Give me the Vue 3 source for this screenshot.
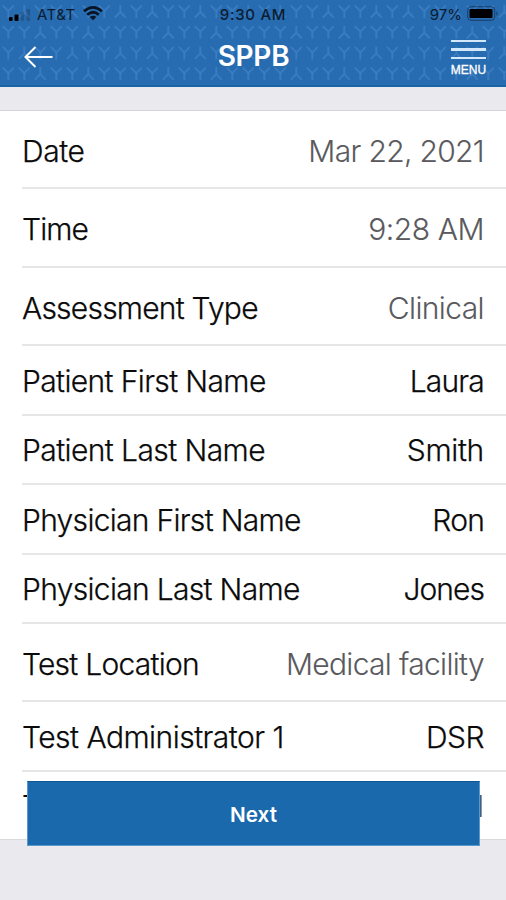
<script setup>
// track / valueTrack: letter spacing of the label and of the value, in px
const rows = [
  { label: 'Date', value: 'Mar 22, 2021', soft: true, size: 'first', track: -0.4, valueTrack: -0.66 },
  { label: 'Time', value: '9:28 AM', soft: true, size: 'second', track: -0.9, valueTrack: -0.45 },
  { label: 'Assessment Type', value: 'Clinical', soft: true, size: 'tall', track: -0.78, valueTrack: -0.6 },
  { label: 'Patient First Name', value: 'Laura', size: 'short', track: -0.62, valueTrack: -0.8 },
  { label: 'Patient Last Name', value: 'Smith', size: 'short', track: -0.58, valueTrack: -0.3 },
  { label: 'Physician First Name', value: 'Ron', size: 'short', track: -0.7, valueTrack: -0.8 },
  { label: 'Physician Last Name', value: 'Jones', size: 'short', track: -0.68, valueTrack: -0.95 },
  { label: 'Test Location', value: 'Medical facility', soft: true, size: 'tall', track: -0.75, valueTrack: -0.67 },
  { label: 'Test Administrator 1', value: 'DSR', size: 'short', track: -0.52, valueTrack: -0.5 },
  { label: 'T', value: 'l', soft: true, size: 'last', track: 0, valueTrack: 0 },
]

// Header texture repeats every eight marks: Y = upright, A = inverted
const texture = ['YAYYAYYA', 'YYAYYAYY', 'YAYYAYYA', 'YYAYYAYY']
const marks = texture.flatMap((line, r) =>
  [...line.repeat(4)].map((kind, c) => ({ x: 8.3 + c * 16, y: 11.5 + r * 20.7, flip: kind === 'A' })),
)
</script>

<template>
  <main class="screen">
    <header class="header">
      <svg class="texture" width="506" height="86" viewBox="0 0 506 86" aria-hidden="true">
        <path
          v-for="(m, i) in marks"
          :key="i"
          d="M-5.5 -6L0 -.5L5.5 -6M0 -.5V6.5"
          :transform="`translate(${m.x} ${m.y}) scale(1 ${m.flip ? -1 : 1})`"
        />
      </svg>
      <div class="status">
        <div class="carrier">
          <svg class="signal" width="23" height="12" viewBox="0 0 23 12">
            <rect x="1" y="8" width="3.6" height="4" rx="1" />
            <rect x="6.5" y="5.5" width="4" height="6.5" rx="1" />
            <rect x="12.5" y="3" width="3.6" height="9" rx="1" opacity=".18" />
            <rect x="18.5" y="0" width="3.6" height="12" rx="1" opacity=".18" />
          </svg>
          <span class="name">AT&amp;T</span>
          <svg class="wifi" width="20" height="15" viewBox="0 0 20 15">
            <path d="M1 5.3Q10-2.5 19 5.3M4.2 8.7Q10 3.8 15.8 8.7" />
            <path class="solid" d="M6.7 11Q10 8.3 13.3 11L10 14.3Z" />
          </svg>
        </div>
        <span class="clock">9:30 AM</span>
        <div class="power">
          <span>97%</span>
          <svg width="34" height="15" viewBox="0 0 34 15">
            <rect class="shell" x="1.7" y=".7" width="27" height="13.6" rx="3.5" />
            <rect x="3.5" y="3" width="23" height="9" rx="1" />
            <path d="M30.5 5Q32.5 7.5 30.5 10Z" opacity=".5" />
          </svg>
        </div>
      </div>
      <div class="bar">
        <svg class="back" width="30" height="22" viewBox="0 0 30 22">
          <path d="M28.5 11H1.5M11.5 1L1.5 11L11.5 21" />
        </svg>
        <h1 class="title">SPPB</h1>
        <div class="menu">
          <i></i><i></i><i></i>
          <span>MENU</span>
        </div>
      </div>
    </header>
    <section class="list">
      <div v-for="row in rows" :key="row.label" class="row" :class="row.size">
        <span class="label" :style="{ letterSpacing: row.track + 'px' }">{{ row.label }}</span>
        <span
          class="value"
          :class="{ soft: row.soft }"
          :style="{ letterSpacing: row.valueTrack + 'px' }"
        >{{ row.value }}</span>
      </div>
    </section>
    <button class="next">Next</button>
  </main>
</template>

<style>
body { background: #e9e9ee; }
</style>

<style scoped>
.screen {
  position: relative;
  width: 506px;
  height: 900px;
  overflow: hidden;
  background: #e9e9ee;
  font-family: Inter, "Liberation Sans", sans-serif;
}
.header {
  position: relative;
  box-sizing: border-box;
  height: 87px;
  background: #276bb0;
  border-bottom: 2px solid #1764a9;
}
.texture { position: absolute; inset: 0; fill: none; stroke: #3b7bbf; stroke-width: 2; }
.status {
  position: relative;
  display: grid;
  grid-template-columns: 1fr auto 1fr;
  align-items: center;
  height: 29px;
  padding: 0 8px;
  color: #0b1c30;
  font-size: 15px;
}
.carrier { display: flex; align-items: center; }
.signal { margin-right: 6px; }
.name { letter-spacing: .5px; }
.wifi { margin-left: 7px; margin-top: -2px; fill: none; stroke: #071525; stroke-width: 2.7; }
.wifi .solid { fill: #071525; stroke: none; }
.clock { font-weight: 500; letter-spacing: .7px; }
.power { display: flex; align-items: center; justify-content: flex-end; gap: 4px; }
.power svg { margin-right: -2px; margin-top: -2px; }
.shell { fill: none; stroke: #0b1c30; stroke-opacity: .55; }
.bar {
  position: relative;
  display: grid;
  grid-template-columns: 1fr auto 1fr;
  align-items: center;
  height: 56px;
  padding: 0 20px 0 24px;
  color: #fff;
}
.back { fill: none; stroke: #fff; stroke-width: 2; }
.title { margin: -2px 3px 0 0; font-size: 28px; font-weight: 600; line-height: 34px; letter-spacing: -.3px; }
.menu { justify-self: end; display: flex; flex-direction: column; align-items: center; gap: 6px; width: 35px; padding-top: 2px; }
.menu i { width: 35px; height: 2.4px; background: #d3e8fb; }
.menu span { margin-top: -1px; font: 12px/12px "Liberation Sans", sans-serif; -webkit-text-stroke: .3px #fff; }
.list { box-sizing: border-box; height: 730px; margin-top: 23px; background: #fff; border-top: 1px solid #d5d5d9; border-bottom: 1px solid #d9d9dd; }
.row {
  box-sizing: border-box;
  display: flex;
  align-items: center;
  justify-content: space-between;
  margin-left: 22px;
  padding-right: 22px;
  border-bottom: 2px solid #e6e6e8;
  color: #0a0a0a;
  font-size: 30px;
  font-weight: 300;
  line-height: 36px;
  white-space: nowrap;
  -webkit-text-stroke: .25px currentColor;
}
.first { height: 78px; padding-top: 4px; }
.second { height: 79px; padding-top: 3px; }
.tall { height: 78px; padding-top: 4px; }
.short { height: 69.5px; padding-top: 1.5px; }
.last { height: 69px; border-bottom: 0; padding-top: 0; }
.soft { color: #5a5a5e; -webkit-text-stroke-width: .1px; }
.next {
  position: absolute;
  left: 27px;
  top: 781px;
  width: 453px;
  height: 65px;
  padding: 1px 0 0;
  border: 1px solid #5d98ca;
  border-top: 1px solid #0d5797;
  background: #1a69ad;
  color: #fff;
  font: 600 20.7px Inter, sans-serif;
}
</style>
